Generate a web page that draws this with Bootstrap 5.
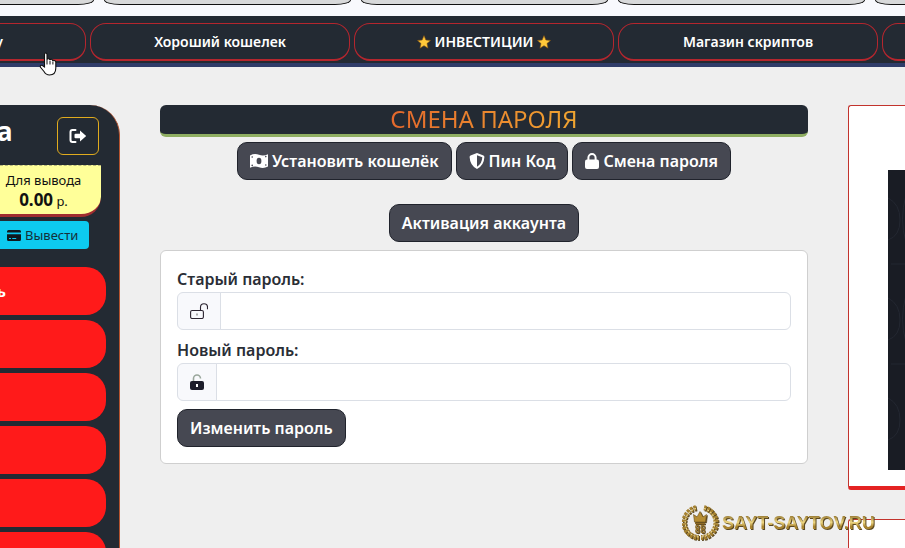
<!DOCTYPE html>
<html lang="ru">
<head>
<meta charset="utf-8">
<meta name="viewport" content="width=device-width, initial-scale=1">
<title>Смена пароля</title>
<link href="https://cdn.jsdelivr.net/npm/bootstrap@5.3.0/dist/css/bootstrap.min.css" rel="stylesheet">
<style>
:root { --ink: #232a33; }
body { font-family: "Noto Sans", "Liberation Sans", sans-serif; background: #efefef; overflow: hidden; height: 100vh; }
.strip { background: #f8f9fd; height: 16px; overflow: hidden; }
.strip-inner { margin: 0 -217px 0 -153px; gap: 10px; }
.strip-inner a { flex: 1 1 0; height: 5px; background: #d8d9da; border: 1px solid #111; border-top: 0; border-radius: 0 0 16px 16px / 0 0 5px 5px; }
.menu-bar { background: var(--ink); border-bottom: 4px solid #2f3c69; overflow: hidden; padding: 7px 0 2px; }
.menu-inner { margin: 0 -237px 0 -174px; gap: 4px; }
.menu-inner a { flex: 1 1 0; min-width: 0; height: 38px; border: 1px solid #b5262e; border-bottom-width: 2px; border-radius: 16px; color: #fff; font-size: 14px; font-weight: 600; text-decoration: none; }
.menu-cut span { margin-right: 82px; }
.star { width: 14px; height: 14px; }
.layout { gap: 40px; padding-top: 38px; min-height: 0; overflow: hidden; }
.side { flex: 0 0 120px; background: var(--ink); border-right: 1px solid #b5532f; border-radius: 0 30px 0 0; padding-top: 12px; }
.side-head { padding-right: 20px; height: 48px; }
.side-name { color: #fff; font-size: 26px; font-weight: 700; line-height: 28px; margin-left: -3px; }
.btn-exit { width: 42px; height: 38px; padding: 0; border: 1px solid #e0ab1e; color: #fff; border-radius: 6px; }
.payout { background: #ffff99; color: #111; border-top: 1px dashed #b9b97a; border-bottom: 3px solid #a02c30; border-radius: 0 0 20px 0; margin-right: 18px; height: 52px; padding: 5px 14px 0 0; font-size: 13px; line-height: 19px; }
.payout strong { font-size: 17px; }
.btn-out { background: #0dcaf0; color: #14303a; font-size: 13px; line-height: 20px; padding: 4px 10px 4px 7px; border-radius: 0 4px 4px 0; margin: 4px 0 18px; width: 89px; }
.side-list { gap: 5px; padding-right: 13px; }
.side-list a { height: 48px; background: #ff1a1a; border-radius: 0 20px 20px 0; color: #fff; font-size: 15px; font-weight: 700; text-decoration: none; overflow: hidden; flex-shrink: 0; }
.side-list span { margin-left: -3px; }
.main-col { flex: 1 1 0; min-width: 0; }
.page-title { background: var(--ink); border-bottom: 3px solid #8fae62; border-radius: 6px; font-size: 24px; font-weight: 400; line-height: 28px; height: 32px; }
.page-title span { background: linear-gradient(90deg, #e4682c, #f0a531); -webkit-background-clip: text; background-clip: text; color: transparent; }
.tabs-row { margin-top: 5px; }
.btn-slate { --bs-btn-color: #fff; --bs-btn-bg: #464852; --bs-btn-border-color: #20232c; --bs-btn-hover-color: #fff; --bs-btn-hover-bg: #32343d; --bs-btn-border-radius: 10px; --bs-btn-font-weight: 600; }
.btn-slate svg { height: 16px; }
.pass-card { border: 1px solid #cfcfcf; border-radius: 6px; }
.pass-card label { display: block; font-weight: 600; color: #2a2e36; line-height: 24px; margin-bottom: 1px; }
.pass-card .input-group, .pass-card .form-control, .pass-card .input-group-text { height: 38px; border-color: #dbdfe6; }
.pass-card .input-group-text { background: #f8f9fc; }
.right-col { flex: 0 0 57px; gap: 29px; }
.promo { background: #fff; border: 1px solid #c2332d; border-right: 0; border-bottom: 4px solid #e42222; border-radius: 3px 0 0 3px; padding: 64px 0 16px 39px; }
.promo-art { background: #191c24; height: 300px; }
.promo-next { min-height: 120px; }
.brand { position: absolute; left: 682px; top: 504px; height: 38px; gap: 3px; filter: drop-shadow(1px 1px 0 #5a4720); }
.brand-text { font-family: "Liberation Sans Narrow", "Liberation Sans", sans-serif; font-weight: 700; font-size: 18px; line-height: 38px; background: linear-gradient(#8a6a24 28%, #efd884 48%, #a37e2b 60%, #c9a548 74%); -webkit-background-clip: text; background-clip: text; color: transparent; }
.pointer { position: absolute; left: 39px; top: 52px; }
</style>
</head>
<body class="d-flex flex-column">
<header>
  <div class="strip"><div class="strip-inner d-flex"><a href="#" aria-label="1"></a><a href="#" aria-label="2"></a><a href="#" aria-label="3"></a><a href="#" aria-label="4"></a><a href="#" aria-label="5"></a></div></div>
  <nav class="menu-bar">
    <div class="menu-inner d-flex">
      <a href="#" class="menu-cut d-flex align-items-center justify-content-end"><span>у</span></a>
      <a href="#" class="d-flex align-items-center justify-content-center">Хороший кошелек</a>
      <a href="#" class="d-flex align-items-center justify-content-center gap-1">
        <svg class="star" viewBox="0 0 14 14"><path d="M7 .6 8.900 5l4.700.4L10 8.500l1.100 4.700L7 10.700 2.900 13.200 4 8.500.4 5.400 5.100 5z" fill="#ffc83a" stroke="#7a4c13" stroke-width=".6"/></svg>ИНВЕСТИЦИИ<svg class="star" viewBox="0 0 14 14"><path d="M7 .6 8.900 5l4.700.4L10 8.500l1.100 4.700L7 10.700 2.900 13.200 4 8.500.4 5.400 5.100 5z" fill="#ffc83a" stroke="#7a4c13" stroke-width=".6"/></svg></a>
      <a href="#" class="d-flex align-items-center justify-content-center">Магазин скриптов</a>
      <a href="#" aria-label="6"></a>
    </div>
  </nav>
</header>

<div class="layout d-flex flex-grow-1 align-items-start">
  <aside class="side align-self-stretch overflow-hidden">
    <div class="side-head d-flex justify-content-between align-items-start">
      <span class="side-name">а</span>
      <button type="button" class="btn btn-exit d-flex align-items-center justify-content-center" aria-label="Выход">
        <svg width="18" height="16" viewBox="0 0 18 16"><path d="M6.500 2H3.500Q1.500 2 1.500 4v8q0 2 2 2h3" fill="none" stroke="#fff" stroke-width="2" stroke-linecap="round"/><path d="M11 2.600 17.200 8 11 13.400V10.200H6.500Q5.500 10.200 5.500 9.200V6.800Q5.500 5.800 6.500 5.800H11z" fill="#fff"/></svg>
      </button>
    </div>
    <div class="payout text-center">Для вывода<br><strong>0.00</strong> р.</div>
    <button type="button" class="btn btn-out border-0 d-flex align-items-center gap-1">
      <svg width="14" height="11" viewBox="0 0 14 11"><path d="M1.500 0h11Q14 0 14 1.500V2.400H0V1.500Q0 0 1.500 0zM0 4.200h14v5.300Q14 11 12.500 11h-11Q0 11 0 9.500zM2 8v1h2V8zm3.200 0v1h4V8z" fill="#10191e" fill-rule="evenodd"/></svg>Вывести</button>
    <div class="side-list d-flex flex-column">
      <a href="#" class="d-flex align-items-center"><span>ь</span></a>
      <a href="#" aria-label="2"></a>
      <a href="#" aria-label="3"></a>
      <a href="#" aria-label="4"></a>
      <a href="#" aria-label="5"></a>
      <a href="#" aria-label="6"></a>
    </div>
  </aside>

  <main class="main-col">
    <h1 class="page-title text-center mb-0"><span>СМЕНА ПАРОЛЯ</span></h1>
    <div class="tabs-row d-flex justify-content-center gap-1 mb-4">
      <a href="#" class="btn btn-slate d-flex align-items-center gap-1"><svg viewBox="0 0 18 16" width="18"><path d="M0 2.500Q4.500 0 9 1.800T18 1.200V13.500Q13.500 16 9 14.200T0 14.800z" fill="#fff"/><ellipse cx="9" cy="8" rx="2.400" ry="3.200" fill="#464852"/><g fill="#464852"><circle cx="2.200" cy="4" r=".8"/><circle cx="15.800" cy="3.600" r=".8"/><circle cx="2.200" cy="12.400" r=".8"/><circle cx="15.800" cy="12" r=".8"/></g></svg>Установить кошелёк</a>
      <a href="#" class="btn btn-slate d-flex align-items-center gap-1"><svg viewBox="0 0 16 16" width="16"><path d="M8 0 14.500 2.500Q15.500 3 15.400 4 15 12.500 8 16 1 12.500.6 4 .5 3 1.500 2.500zM8 2.200V13.700Q13 10.800 13.300 4.300z" fill="#fff" fill-rule="evenodd"/></svg>Пин Код</a>
      <a href="#" class="btn btn-slate d-flex align-items-center gap-1"><svg viewBox="0 0 14 16" width="14"><path d="M3.400 7.500V4.700a3.600 3.600 0 0 1 7.200 0v2.800" fill="none" stroke="#fff" stroke-width="2"/><rect y="6.500" width="14" height="9.500" rx="2" fill="#fff"/></svg>Смена пароля</a>
    </div>
    <div class="text-center mb-2"><a href="#" class="btn btn-slate">Активация аккаунта</a></div>
    <form class="pass-card bg-white p-3">
      <label for="old">Старый пароль:</label>
      <div class="input-group mb-2">
        <span class="input-group-text"><svg width="18" height="16" viewBox="0 0 18 16"><rect x=".6" y="7.500" width="12.800" height="8" rx="1.500" fill="none" stroke="#2b2430" stroke-width="1.100"/><path d="M10.500 7.500V4.200a3.500 3.500 0 0 1 7 0v2" fill="none" stroke="#2b2430" stroke-width="1.100"/><path d="M7 10.500v2" stroke="#777" stroke-width="1.200"/></svg></span>
        <input type="password" class="form-control" id="old">
      </div>
      <label for="new">Новый пароль:</label>
      <div class="input-group mb-2">
        <span class="input-group-text"><svg width="14" height="16" viewBox="0 0 14 16"><path d="M3.500 7.500V4.500a3.500 3.500 0 0 1 7 0" fill="none" stroke="#9aa79c" stroke-width="1.600"/><rect y="7" width="14" height="9" rx="2" fill="#1c1d2b"/><rect x="6" y="10" width="2" height="3" fill="#fff"/></svg></span>
        <input type="password" class="form-control" id="new">
      </div>
      <button type="submit" class="btn btn-slate">Изменить пароль</button>
    </form>
  </main>

  <aside class="right-col d-flex flex-column">
    <div class="promo"><svg class="promo-art d-block w-100" viewBox="0 0 18 300" preserveAspectRatio="xMinYMin slice"><g fill="none" stroke="#232731" stroke-width="1"><path d="M0 28Q12 34 12 50T0 70M18 25Q11 50 18 72M3 94H18M0 128Q12 134 12 150T0 170M18 125Q11 150 18 172M3 194H18M0 228Q12 234 12 250T0 270"/></g></svg></div>
    <div class="promo promo-next"></div>
  </aside>
</div>

<div class="brand d-flex align-items-center">
  <svg width="37" height="36" viewBox="0 0 37 36">
    <g fill="none" stroke="#a5812f" stroke-width="5" stroke-dasharray="2.500 1"><path d="M14 2.800A15 15 0 0 0 17 32.500M22 2.800A15 15 0 0 1 19 32.500"/></g>
    <g fill="none" stroke="#e8d38b" stroke-width="1.200" stroke-dasharray="2 1.500"><path d="M14 3.500A14.500 14.500 0 0 0 17 32M22 3.500A14.500 14.500 0 0 1 19 32"/></g>
    <path d="M11.500 9.500 15 12l3-5.500 3 5.500 3.500-2.500L23.500 17h-11z" fill="#b68d33" stroke="#6c501b" stroke-width=".6"/>
    <path d="M13 18.500h10" stroke="#8c6a26" stroke-width="1.500"/>
    <g fill="none" stroke="#927029" stroke-width="1.300"><circle cx="15.300" cy="22" r="1.600"/><circle cx="20.700" cy="22" r="1.600"/><circle cx="15.300" cy="26" r="1.600"/><circle cx="20.700" cy="26" r="1.600"/></g>
  </svg>
  <span class="brand-text">SAYT-SAYTOV.RU</span>
</div>
<svg class="pointer" width="20" height="25" viewBox="0 0 20 25"><path d="M5.500 15V2.500Q5.500 1 6.700 1T8 2.500V8Q8.200 6.500 9.500 6.700T11 8.200Q11.300 7 12.500 7.300T13.800 9Q14.200 8 15.400 8.400T16.800 10V16Q16.800 23 10.500 23 7 23 5 19.500L1.300 15Q1 13 3 13.200z" fill="#fff" stroke="#111" stroke-width="1.100"/><path d="M8 8v4.500M11 9v3.500M13.900 9.500v3" stroke="#111" stroke-width="1"/></svg>
<script src="https://cdn.jsdelivr.net/npm/bootstrap@5.3.0/dist/js/bootstrap.bundle.min.js"></script>
</body>
</html>
